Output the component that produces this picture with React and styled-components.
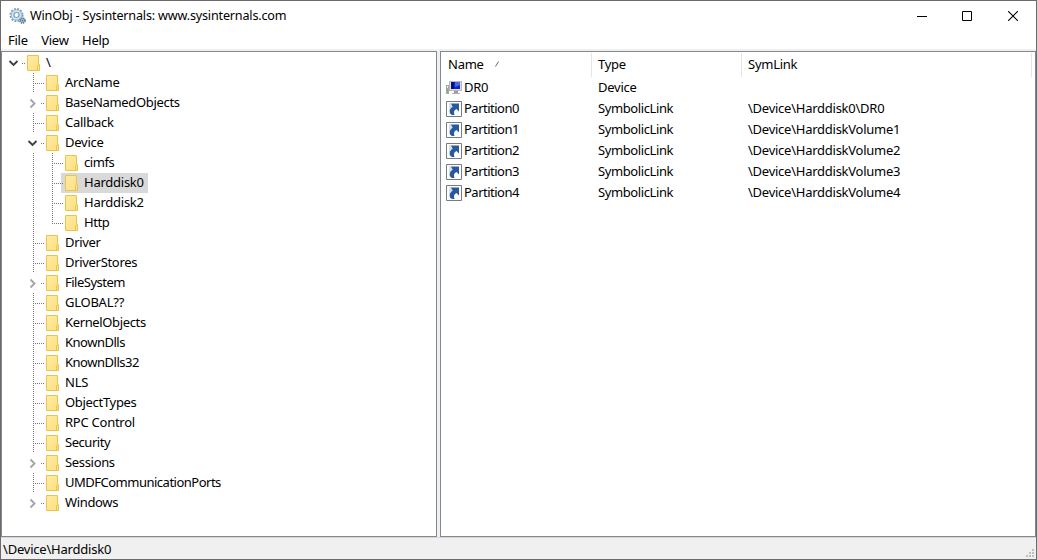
import React from 'react';
import styled, { createGlobalStyle } from 'styled-components';

const GlobalStyle = createGlobalStyle`
  * { box-sizing: border-box; }
  body { margin: 0; background: #fff; overflow: hidden; }
`;

const Window = styled.div`
  width: 1037px;
  height: 560px;
  display: flex;
  flex-direction: column;
  border: 1px solid #6b6b6d;
  background: #fff;
  color: #000;
  font: 13px/20px "Noto Sans", "Open Sans", sans-serif;
  letter-spacing: -0.25px;
  white-space: pre;
  cursor: default;
`;

const TitleBar = styled.header`
  height: 30px;
  flex: none;
  display: flex;
  align-items: center;
  padding-left: 8px;
`;

const Title = styled.div`
  flex: 1;
  padding-left: 4px;
  font-size: 12.6px;
  letter-spacing: -0.18px;
`;

const Caption = styled.div`
  width: 45px;
  height: 28px;
  display: flex;
  align-items: center;
  justify-content: center;
  &:last-child { width: 46px; }
`;

const MenuBar = styled.nav`
  height: 18px;
  flex: none;
  display: flex;
  align-items: center;
  gap: 13.4px;
  padding: 0 7px;
`;

const Body = styled.main`
  flex: 1;
  min-height: 0;
  display: flex;
  gap: 3px;
  padding-top: 2px;
  background: #f0f0f0;
`;

const Panel = styled.section`
  background: #fff;
  border: 1px solid #828790;
  width: ${(p) => p.$width};
  flex: ${(p) => (p.$width ? 'none' : 1)};
`;

const Tree = styled(Panel)`
  padding: 1px 0 0 3px;
`;

const TreeRow = styled.div`
  height: 20px;
  display: flex;
`;

const Guide = styled.svg`
  width: ${(p) => p.$width}px;
  height: 20px;
  flex: none;
  overflow: visible;
  position: relative;
  z-index: 1;
`;

const Node = styled.div`
  height: 20px;
  display: flex;
  align-items: center;
  gap: 6px;
  padding: 0 4px;
  background: ${(p) => (p.$selected ? '#d9d9d9' : 'transparent')};
`;

const Label = styled.span`
  height: 20px;
  line-height: 18px;
  letter-spacing: ${(p) => p.$track || -0.25}px;
`;

const HeaderRow = styled.div`
  display: flex;
  height: 25px;
  padding-top: 1px;
`;

const HeaderCell = styled.div`
  width: ${(p) => p.$width}px;
  height: 24px;
  padding: 0 0 2px ${(p) => p.$pad || 6}px;
  border-right: 1px solid #e5e5e5;
  display: flex;
  align-items: center;
  gap: 11px;
`;

const ListRow = styled.div`
  display: flex;
  height: 21px;
  line-height: 21px;
`;

const Cell = styled.div`
  width: ${(p) => p.$width}px;
  padding-left: ${(p) => p.$pad || 6}px;
  display: flex;
  align-items: center;
  gap: 2px;
  letter-spacing: ${(p) => p.$track || -0.25}px;
`;

const StatusBar = styled.footer`
  height: 22px;
  flex: none;
  display: flex;
  justify-content: space-between;
  align-items: center;
  padding: 0 2px 0;
  background: #f0f0f0;
  border-top: 1px solid #d7d7d7;
  letter-spacing: -0.21px;
`;

const Grip = styled.svg`
  width: 8px;
  height: 8px;
  align-self: flex-end;
  margin-bottom: 2px;
`;

const Folder = () => (
  <svg width="13" height="16" viewBox="0 0 13 16">
    <defs>
      <linearGradient id="fold" x1="0" y1="0" x2="1" y2="1">
        <stop offset="0" stopColor="#ffeba6" />
        <stop offset="1" stopColor="#fddf7c" />
      </linearGradient>
    </defs>
    <path d="M.5.5h11v9h1v6H.5z" fill="url(#fold)" stroke="#e9c54e" />
    <path d="M10.5 15.500V10.500L11.500 9.500" fill="none" stroke="#e9c54e" />
  </svg>
);

const Gear = () => (
  <svg width="17" height="16" viewBox="0 0 17 16">
    <circle cx="7.500" cy="7" r="6" fill="none" stroke="#7898b5" strokeWidth="2" strokeDasharray="1.750 1.390" />
    <circle cx="7.500" cy="7" r="4.200" fill="none" stroke="#9dbbd6" strokeWidth="3.200" />
    <circle cx="7.500" cy="7" r="4" fill="none" stroke="#d4e7f7" strokeWidth="1.500" />
    <circle cx="7.500" cy="7" r="2.500" fill="#fff" stroke="#7895b0" strokeWidth="1" />
    <circle cx="13.500" cy="12.500" r="2.400" fill="#c5d9e9" stroke="#587795" strokeWidth="1.800" strokeDasharray="1.200 .6" />
    <circle cx="13.500" cy="12.500" r=".9" fill="#4e6b87" />
  </svg>
);

const Computer = () => (
  <svg width="16" height="16" viewBox="0 0 16 16">
    <path d="M0 5h3v9H0z" fill="#a4a8a8" />
    <path d="M1 6h1v2H1z" fill="#eee" />
    <path d="M1 9h1v3H1z" fill="#5bc35b" />
    <path d="M3 1h13v10H3z" fill="#b9b9b9" />
    <path d="M4 2h11v8H4z" fill="#dedede" />
    <path d="M5 2h9v7H5z" fill="#1026bd" />
    <path d="M9 2h5v3L9 7z" fill="#4568ef" />
    <path d="M5 2h3v7H5z" fill="#06107f" />
    <path d="M8 11h4v2H8z" fill="#999" />
    <path d="M6 13h8v1H6z" fill="#b2b2b2" />
  </svg>
);

const Shortcut = () => (
  <svg width="16" height="16" viewBox="0 0 16 16">
    <path d="M.5.500h15v15H.5z" fill="#fff" stroke="#777b82" />
    <path d="M4.500 2.500H13v8l-2.500-2.500C8 9 7.500 11 8.500 14H6C2.500 12 2.500 8 6.500 5.500z" fill="#28599d" />
    <path d="M3 2h1.500l2 3.500C4.500 7 3.500 8.500 3.500 11L3 13z" fill="#d5e0ee" />
  </svg>
);

const Ln = (p) => <line stroke="#777" strokeDasharray="1 1" {...p} />;

function Branch({ state, last }) {
  return (
    <Guide $width={18}>
      {!state && <Ln x1="9.500" x2="9.500" y1="0" y2={last ? 11 : 20} />}
      <Ln x1={state ? 17 : 11} x2="20" y1="10.500" y2="10.500" />
      {state === 'open' && <path d="M4.500 8l4 4 4-4" fill="none" stroke="#404040" strokeWidth="1.900" />}
      {state === 'closed' && <path d="M6.500 6.500l4 4-4 4" fill="none" stroke="#a6a6a6" strokeWidth="1.900" />}
    </Guide>
  );
}

const nodes = [
  { name: '\\', depth: 0, state: 'open' },
  { name: 'ArcName', depth: 1 },
  { name: 'BaseNamedObjects', depth: 1, state: 'closed', track: -0.33 },
  { name: 'Callback', depth: 1 },
  { name: 'Device', depth: 1, state: 'open' },
  { name: 'cimfs', depth: 2, track: -0.45 },
  { name: 'Harddisk0', depth: 2 },
  { name: 'Harddisk2', depth: 2 },
  { name: 'Http', depth: 2, last: true, track: -0.4 },
  { name: 'Driver', depth: 1, track: -0.35 },
  { name: 'DriverStores', depth: 1, track: -0.31 },
  { name: 'FileSystem', depth: 1, state: 'closed', track: -0.5 },
  { name: 'GLOBAL??', depth: 1 },
  { name: 'KernelObjects', depth: 1, track: -0.36 },
  { name: 'KnownDlls', depth: 1, track: -0.5 },
  { name: 'KnownDlls32', depth: 1, track: -0.48 },
  { name: 'NLS', depth: 1 },
  { name: 'ObjectTypes', depth: 1, track: -0.31 },
  { name: 'RPC Control', depth: 1 },
  { name: 'Security', depth: 1, track: -0.45 },
  { name: 'Sessions', depth: 1, state: 'closed', track: -0.33 },
  { name: 'UMDFCommunicationPorts', depth: 1, track: -0.5 },
  { name: 'Windows', depth: 1, state: 'closed', track: -0.36 },
];

const links = [
  { name: 'Partition0', target: '\\Device\\Harddisk0\\DR0' },
  { name: 'Partition1', target: '\\Device\\HarddiskVolume1' },
  { name: 'Partition2', target: '\\Device\\HarddiskVolume2' },
  { name: 'Partition3', target: '\\Device\\HarddiskVolume3' },
  { name: 'Partition4', target: '\\Device\\HarddiskVolume4' },
];

export default function App() {
  return (
    <Window>
      <GlobalStyle />
      <TitleBar>
        <Gear />
        <Title>WinObj - Sysinternals: www.sysinternals.com</Title>
        <Caption><svg width="11" height="10"><path d="M0 5.500h10" stroke="#000" /></svg></Caption>
        <Caption><svg width="11" height="10"><path d="M.5.500h9v9h-9z" fill="none" stroke="#000" /></svg></Caption>
        <Caption><svg width="10" height="10"><path d="M0 0l10 10M10 0L0 10" stroke="#000" strokeWidth="1.100" /></svg></Caption>
      </TitleBar>
      <MenuBar><span>File</span><span>View</span><span>Help</span></MenuBar>
      <Body>
        <Tree $width="436px">
          {nodes.map(({ name, depth, state, last, track }) => (
            <TreeRow key={name}>
              {depth > 0 && <Guide $width={19} />}
              {depth > 1 && <Guide $width={19}><Ln x1="9.500" x2="9.500" y1="0" y2="20" /></Guide>}
              <Branch state={state} last={last} />
              <Node $selected={name === 'Harddisk0'}><Folder /><Label $track={track}>{name}</Label></Node>
            </TreeRow>
          ))}
        </Tree>
        <Panel>
          <HeaderRow>
            <HeaderCell $width={151} $pad={7}>
              Name
              <svg width="5" height="6"><path d="M.5 5.500L3.500 .5" stroke="#666" /></svg>
            </HeaderCell>
            <HeaderCell $width={150}>Type</HeaderCell>
            <HeaderCell $width={290}>SymLink</HeaderCell>
          </HeaderRow>
          <ListRow>
            <Cell $width={151} $pad={5}><Computer />DR0</Cell>
            <Cell $width={150}>Device</Cell>
          </ListRow>
          {links.map(({ name, target }) => (
            <ListRow key={name}>
              <Cell $width={151} $pad={5} $track={-0.5}><Shortcut />{name}</Cell>
              <Cell $width={150} $track={-0.4}>SymbolicLink</Cell>
              <Cell $width={290}>{target}</Cell>
            </ListRow>
          ))}
        </Panel>
      </Body>
      <StatusBar>
        <span>\Device\Harddisk0</span>
        <Grip>
          <path d="M6 0h2v2H6zM3 3h2v2H3zM6 3h2v2H6zM0 6h2v2H0zM3 6h2v2H3zM6 6h2v2H6z" fill="#bfbfbf" />
        </Grip>
      </StatusBar>
    </Window>
  );
}
